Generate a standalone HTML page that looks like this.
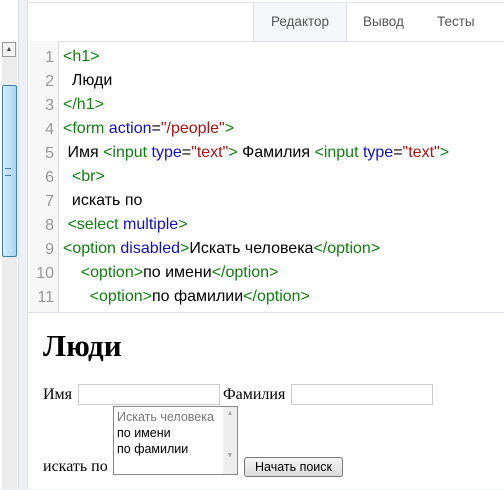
<!DOCTYPE html>
<html><head><meta charset="utf-8"><style>
body{margin:0;width:504px;height:489px;overflow:hidden;background:#eef0f4;font-family:"Liberation Sans",sans-serif;position:relative}
.left{position:absolute;left:0;top:0;width:18px;height:489px;background:#fff;border-right:1px solid #dde0e5}
.sb{position:absolute;left:2px;top:42px;width:15px;height:447px;background:#ececec}
.up{position:absolute;left:2px;top:42px;width:14px;height:15px;background:#f4f4f4;border:1px solid #999;box-sizing:border-box;font-size:7px;text-align:center;line-height:13px;color:#444}
.thumb{position:absolute;left:2px;top:85px;width:15px;height:172px;box-sizing:border-box;border:1px solid #3c7fb1;background:linear-gradient(90deg,#d6ecfa,#a9d5f3);border-radius:2px}
.grip{position:absolute;left:5px;top:168px;width:6px;height:6px;border-top:1px solid #4a7ea8;border-bottom:1px solid #4a7ea8}
.right{position:absolute;left:27px;top:0;width:477px;height:489px;background:#fff;border-left:1px solid #dde0e5}
.tabs{position:absolute;left:0;top:2px;width:477px;height:38px;border-bottom:1px solid #dde0e5;border-top:1px solid #e4e6ea}
.tab{position:absolute;top:0;height:38px;line-height:38px;font-size:13.5px;color:#555}
.gut{position:absolute;left:0;top:41px;width:30px;height:271px;background:#f7f7f7;border-right:1px solid #ddd}
.ln{position:absolute;right:4px;font-size:16px;color:#999;text-align:right}
.code{position:absolute;left:35px;font-size:16px;white-space:pre;color:#000}
.g{color:#108010}.b{color:#1010c8}.r{color:#b01010}
.out{position:absolute;left:0;top:312px;width:477px;height:177px;border-top:1px solid #dde0e5;font-family:"Liberation Serif",serif;font-size:16px}
</style></head><body>
<div class="left"></div>
<div class="sb"></div><div class="up">▲</div>
<div class="thumb"></div><div class="grip"></div>
<div class="right">
<div class="tabs">
<div class="tab" style="left:225px;width:92px;background:#f5f6f9;border-left:1px solid #e0e2e6;border-right:1px solid #e0e2e6;text-align:center">Редактор</div>
<div class="tab" style="left:335px">Вывод</div>
<div class="tab" style="left:409px">Тесты</div>
</div>
<div class="gut">
<div class="ln" style="top:8px">1</div><div class="ln" style="top:32px">2</div><div class="ln" style="top:56px">3</div><div class="ln" style="top:80px">4</div><div class="ln" style="top:104px">5</div><div class="ln" style="top:128px">6</div><div class="ln" style="top:152px">7</div><div class="ln" style="top:176px">8</div><div class="ln" style="top:200px">9</div><div class="ln" style="top:224px">10</div><div class="ln" style="top:248px">11</div>
</div>
<div class="code" style="top:48px"><span class="g">&lt;h1&gt;</span></div>
<div class="code" style="top:72px">  Люди</div>
<div class="code" style="top:96px"><span class="g">&lt;/h1&gt;</span></div>
<div class="code" style="top:120px"><span class="g">&lt;form </span><span class="b">action</span>=<span class="r">"/people"</span><span class="g">&gt;</span></div>
<div class="code" style="top:144px"> Имя <span class="g">&lt;input </span><span class="b">type</span>=<span class="r">"text"</span><span class="g">&gt;</span> Фамилия <span class="g">&lt;input </span><span class="b">type</span>=<span class="r">"text"</span><span class="g">&gt;</span></div>
<div class="code" style="top:168px">  <span class="g">&lt;br&gt;</span></div>
<div class="code" style="top:192px">  искать по</div>
<div class="code" style="top:216px"> <span class="g">&lt;select </span><span class="b">multiple</span><span class="g">&gt;</span></div>
<div class="code" style="top:240px"><span class="g">&lt;option </span><span class="b">disabled</span><span class="g">&gt;</span>Искать человека<span class="g">&lt;/option&gt;</span></div>
<div class="code" style="top:264px">    <span class="g">&lt;option&gt;</span>по имени<span class="g">&lt;/option&gt;</span></div>
<div class="code" style="top:288px">      <span class="g">&lt;option&gt;</span>по фамилии<span class="g">&lt;/option&gt;</span></div>
<div class="out">
<div style="position:absolute;left:15px;top:15px;font-size:31px;font-weight:bold">Люди</div>
<div style="position:absolute;left:15px;top:73px">Имя</div>
<div style="position:absolute;left:50px;top:71px;width:142px;height:21px;border:1px solid #ccc;box-sizing:border-box"></div>
<div style="position:absolute;left:195px;top:73px">Фамилия</div>
<div style="position:absolute;left:263px;top:71px;width:142px;height:21px;border:1px solid #ccc;box-sizing:border-box"></div>
<div style="position:absolute;left:15px;top:145px">искать по</div>
<div style="position:absolute;left:85px;top:93px;width:125px;height:69px;border:1px solid #888;box-sizing:border-box;font-family:'Liberation Sans',sans-serif;font-size:12.5px;line-height:16px;padding:2px 3px">
<div style="color:#777">Искать человека</div><div>по имени</div><div>по фамилии</div>
<div style="position:absolute;right:0;top:0;width:14px;height:67px;background:#eee;color:#aaa;font-size:7px;text-align:center;line-height:14px">▲<br><br><br>▼</div>
</div>
<div style="position:absolute;left:216px;top:144px;width:99px;height:20px;border:1px solid #777;border-radius:3px;box-sizing:border-box;background:linear-gradient(#f6f6f6,#dcdcdc);font-family:'Liberation Sans',sans-serif;font-size:12.5px;text-align:center;line-height:18px">Начать поиск</div>
</div>
</div>
</body></html>
